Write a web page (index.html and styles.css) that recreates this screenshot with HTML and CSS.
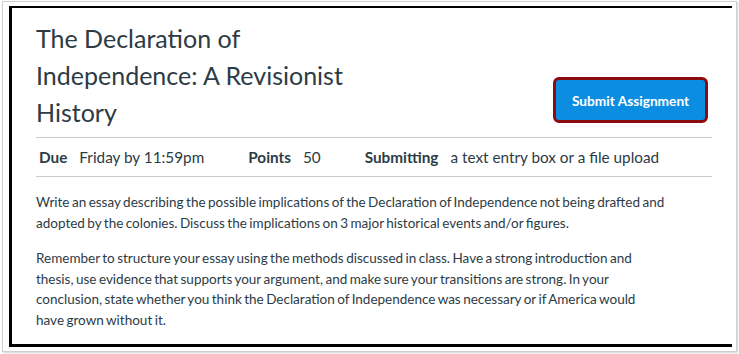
FILE: index.html
```html
<!DOCTYPE html>
<html>
<head>
<meta charset="utf-8">
<link rel="stylesheet" href="styles.css">
</head>
<body>
<div class="frame">
  <div class="card">
    <div class="header">
      <h1 class="title">The Declaration of<br>Independence: A Revisionist<br>History</h1>
      <button class="submit">Submit Assignment</button>
    </div>
    <ul class="meta">
      <li class="meta-item due"><span class="label">Due</span><span class="value">Friday by 11:59pm</span></li>
      <li class="meta-item points"><span class="label">Points</span><span class="value">50</span></li>
      <li class="meta-item"><span class="label">Submitting</span><span class="value">a text entry box or a file upload</span></li>
    </ul>
    <div class="description">
      <p>Write an essay describing the possible implications of the Declaration of Independence not being drafted and adopted by the colonies. Discuss the implications on 3 major historical events and/or figures.</p>
      <p>Remember to structure your essay using the methods discussed in class. Have a strong introduction and<br>thesis, use evidence that supports your argument, and make sure your transitions are strong. In your<br>conclusion, state whether you think the Declaration of Independence was necessary or if America would<br>have grown without it.</p>
    </div>
  </div>
</div>
</body>
</html>
```

FILE: styles.css
```css
html, body {
  margin: 0;
  padding: 0;
  background: #ffffff;
}
body {
  width: 739px;
  height: 354px;
  padding: 1px 0 0 2px;
  box-sizing: border-box;
  font-family: Lato, "Open Sans", sans-serif;
  color: #2d3b45;
}
.frame {
  width: 735px;
  height: 351px;
  box-sizing: border-box;
  border: 1px solid #cfcfcf;
  box-shadow: 1px 1px 2px rgba(0,0,0,0.18);
  padding: 4px 4px 4px 6px;
  background: #fff;
}
.card {
  height: 341px;
  box-sizing: border-box;
  border-left: 3px solid #000;
  border-top: 2px solid #000;
  border-bottom: 3px solid #000;
  padding: 0 20px 0 24px;
}
.header {
  display: flex;
  justify-content: space-between;
  align-items: flex-end;
  border-bottom: 1px solid #c7cdd1;
  padding-top: 12px;
  padding-bottom: 6px;
}
.title {
  margin: 0;
  font-weight: 400;
  font-size: 25px;
  line-height: 37px;
  color: #2d3b45;
}
.submit {
  font-family: Lato, sans-serif;
  font-weight: 700;
  font-size: 13.7px;
  color: #fff;
  background: #0b8ee2;
  border: 3px solid #8a0c0f;
  border-radius: 6px;
  width: 155px;
  height: 46px;
  padding: 0;
  margin-bottom: 8px;
  margin-right: 4px;
}
.meta {
  list-style: none;
  margin: 0;
  padding: 0 0 0 3px;
  display: flex;
  align-items: center;
  height: 38px;
  border-bottom: 1px solid #c7cdd1;
  font-size: 15.3px;
}
.meta-item {
  display: flex;
  gap: 12px;
  margin-right: 44px;
}
.label {
  font-weight: 700;
}
.description {
  max-width: 676px;
  padding-top: 15px;
  font-size: 13.5px;
  word-spacing: -1px;
  line-height: 20.5px;
}
.description p {
  margin: 0 0 15px 0;
}
```
